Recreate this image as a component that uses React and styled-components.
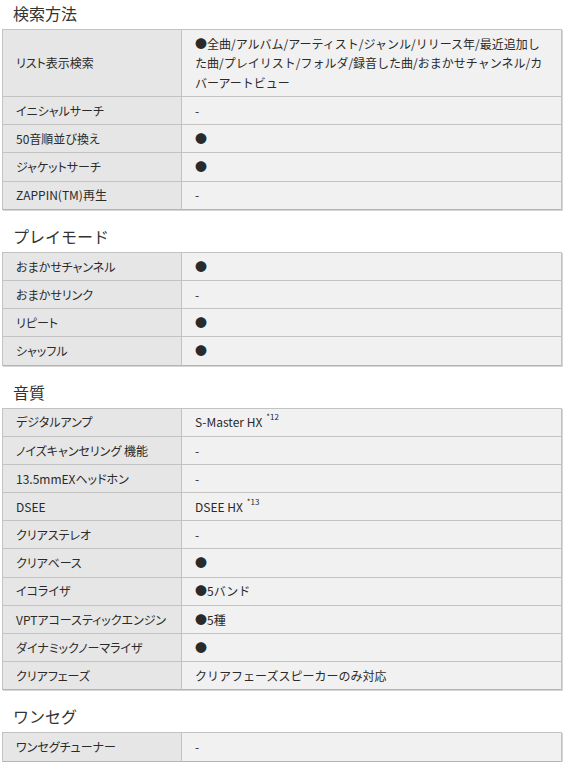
import React from 'react';
import styled, { createGlobalStyle } from 'styled-components';

const GlobalStyle = createGlobalStyle`
    html, body {
        margin: 0;
        padding: 0;
        background: #ffffff;
    }
    body {
        font-family: "Noto Sans CJK JP", "Liberation Sans", sans-serif;
        color: #2a2a2a;
    }
`;

const Page = styled.div`
    width: 560px;
    padding: 0 0 0 2px;
`;

const Section = styled.section`
    & + & {
        margin-top: 13px;
    }
`;

const Heading = styled.h2`
    margin: 0;
    padding-left: 11px;
    height: 29px;
    line-height: 27px;
    font-size: 16px;
    font-weight: normal;
    color: #333333;
`;

const SpecTable = styled.div`
    display: grid;
    grid-template-columns: 179px 1fr;
    border: 1px solid #c3c3c3;
    border-bottom: none;
    box-shadow: 1px 1px 0 #d6d6d6;
`;

const Cell = styled.div`
    box-sizing: border-box;
    height: ${(p) => (p.$tall ? '67px' : '28.2px')};
    padding: 0 13px;
    line-height: 19.5px;
    font-size: 12px;
    font-feature-settings: ${(p) => (p.$head ? '"palt"' : 'normal')};
    border-bottom: 1px solid ${(p) => (p.$last ? '#b4b4b4' : '#c3c3c3')};
    background: ${(p) => (p.$head ? '#e6e6e6' : '#f1f1f1')};
    border-right: ${(p) => (p.$head ? '1px solid #c3c3c3' : 'none')};
    white-space: nowrap;
    display: flex;
    align-items: center;
`;

const Value = styled.div`
    font-size: 12px;
`;

const Note = styled.sup`
    font-size: 8px;
    line-height: 0;
    margin-left: 4px;
    position: relative;
    top: -2px;
`;

const D = '●';

const sections = [
    {
        title: '検索方法',
        rows: [
            [
                'リスト表示検索',
                <>
                    {D}全曲/アルバム/アーティスト/ジャンル/リリース年/最近追加し<br />
                    た曲/プレイリスト/フォルダ/録音した曲/おまかせチャンネル/カ<br />
                    バーアートビュー
                </>,
                true,
            ],
            ['イニシャルサーチ', '-'],
            ['50音順並び換え', D],
            ['ジャケットサーチ', D],
            ['ZAPPIN(TM)再生', '-'],
        ],
    },
    {
        title: 'プレイモード',
        rows: [
            ['おまかせチャンネル', D],
            ['おまかせリンク', '-'],
            ['リピート', D],
            ['シャッフル', D],
        ],
    },
    {
        title: '音質',
        rows: [
            ['デジタルアンプ', <>S-Master HX<Note>*12</Note></>],
            ['ノイズキャンセリング 機能', '-'],
            ['13.5mmEXヘッドホン', '-'],
            ['DSEE', <>DSEE HX<Note>*13</Note></>],
            ['クリアステレオ', '-'],
            ['クリアベース', D],
            ['イコライザ', D + '5バンド'],
            ['VPTアコースティックエンジン', D + '5種'],
            ['ダイナミックノーマライザ', D],
            ['クリアフェーズ', 'クリアフェーズスピーカーのみ対応'],
        ],
    },
    {
        title: 'ワンセグ',
        rows: [['ワンセグチューナー', '-']],
    },
];

export default function App() {
    return (
        <Page>
            <GlobalStyle />
            {sections.map((s) => (
                <Section key={s.title}>
                    <Heading>{s.title}</Heading>
                    <SpecTable>
                        {s.rows.map(([label, value, tall], i) => {
                            const last = i === s.rows.length - 1;
                            return (
                                <React.Fragment key={label}>
                                    <Cell $head $tall={tall} $last={last}>{label}</Cell>
                                    <Cell $tall={tall} $last={last}>
                                        <Value>{value}</Value>
                                    </Cell>
                                </React.Fragment>
                            );
                        })}
                    </SpecTable>
                </Section>
            ))}
        </Page>
    );
}
